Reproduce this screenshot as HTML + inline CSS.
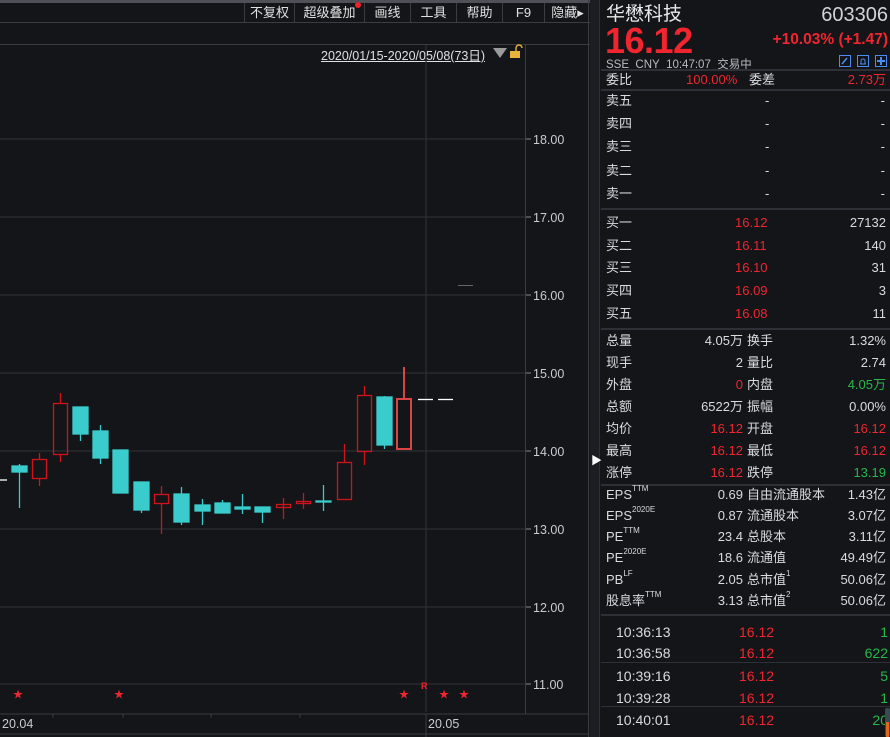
<!DOCTYPE html>
<html><head><meta charset="utf-8"><style>
*{margin:0;padding:0;box-sizing:border-box}
body{width:890px;height:737px;background:#131519;overflow:hidden;position:relative;font-family:"Liberation Sans","Noto Sans CJK SC",sans-serif;color:#d8dbe0}
.a{position:absolute;white-space:nowrap}
.tb{position:absolute;top:3px;height:19px;font-size:13px;color:#e0e0e0;text-align:center;line-height:19px;border-left:1px solid #3a3c42}
.r{color:#f0252f}.g{color:#27b84a}
.row{position:absolute;left:601px;width:287px;height:22px;font-size:13px;line-height:22px}
.row span{position:absolute}
.hl{position:absolute;left:601px;width:289px;height:2px;background:#2d3036}
sup{font-size:8px;vertical-align:top;line-height:10px}
</style></head><body>
<div class="a" style="left:0;top:0;width:590px;height:3px;background:#4f5058"></div>
<div class="a" style="left:0;top:22px;width:590px;height:1px;background:#3a3c42"></div>
<div class="a" style="left:0;top:44px;width:590px;height:1px;background:#3a3c42"></div>
<div class="tb" style="left:244px;width:50px">不复权</div>
<div class="tb" style="left:294px;width:70px">超级叠加<span style="position:absolute;right:3px;top:-1px;width:6px;height:6px;border-radius:3px;background:#f0202a"></span></div>
<div class="tb" style="left:364px;width:46px">画线</div>
<div class="tb" style="left:410px;width:46px">工具</div>
<div class="tb" style="left:456px;width:46px">帮助</div>
<div class="tb" style="left:502px;width:42px">F9</div>
<div class="tb" style="left:544px;width:46px">隐藏▸</div>
<div class="a" style="left:321px;top:45px;font-size:12.5px;color:#e0e0e0;text-decoration:underline">2020/01/15-2020/05/08(73日)</div>
<svg class="a" style="left:0;top:0" width="590" height="737">
<polygon points="493,48 507,48 500,58" fill="#9a9a9a"/>
<rect x="510" y="51" width="10" height="7" fill="#e8b33a"/><path d="M516,51 v-3 a3,3 0 0 1 6,0" stroke="#e8b33a" fill="none" stroke-width="1.4"/>
<g stroke="#2c2e33" stroke-width="1.3">
<line x1="0" y1="139" x2="525" y2="139"/><line x1="0" y1="217" x2="525" y2="217"/><line x1="0" y1="295" x2="525" y2="295"/><line x1="0" y1="373" x2="525" y2="373"/><line x1="0" y1="451" x2="525" y2="451"/><line x1="0" y1="529" x2="525" y2="529"/><line x1="0" y1="607" x2="525" y2="607"/><line x1="0" y1="684" x2="525" y2="684"/>
<line x1="426" y1="45" x2="426" y2="712"/>
</g>
<line x1="525.5" y1="45" x2="525.5" y2="714" stroke="#3a3c42"/>
<line x1="588.5" y1="0" x2="588.5" y2="737" stroke="#3a3c42"/>
<line x1="0" y1="714" x2="588" y2="714" stroke="#3a3c42"/>
<line x1="0" y1="734" x2="588" y2="734" stroke="#3a3c42"/>
<g stroke="#3a3c42"><line x1="426" y1="714" x2="426" y2="737"/><line x1="53" y1="714" x2="53" y2="718"/><line x1="123" y1="714" x2="123" y2="718"/><line x1="211" y1="714" x2="211" y2="718"/><line x1="300" y1="714" x2="300" y2="718"/></g>
<g stroke="#888" ><line x1="526" y1="139" x2="531" y2="139"/><line x1="526" y1="217" x2="531" y2="217"/><line x1="526" y1="295" x2="531" y2="295"/><line x1="526" y1="373" x2="531" y2="373"/><line x1="526" y1="451" x2="531" y2="451"/><line x1="526" y1="529" x2="531" y2="529"/><line x1="526" y1="607" x2="531" y2="607"/><line x1="526" y1="684" x2="531" y2="684"/></g>
<g font-size="12.5" fill="#c8ccd2" font-family="Liberation Sans"><text x="533" y="144">18.00</text><text x="533" y="222">17.00</text><text x="533" y="300">16.00</text><text x="533" y="378">15.00</text><text x="533" y="456">14.00</text><text x="533" y="534">13.00</text><text x="533" y="612">12.00</text><text x="533" y="689">11.00</text>
<text x="2" y="728">20.04</text><text x="428" y="728">20.05</text></g>
<g stroke="#3acccc" fill="#3acccc" stroke-width="1.3">
<line x1="19.5" y1="464" x2="19.5" y2="508"/><rect x="12" y="466" width="15" height="6"/>
<line x1="80.5" y1="434" x2="80.5" y2="441"/><rect x="73" y="407" width="15" height="27"/>
<line x1="100.5" y1="425" x2="100.5" y2="464"/><rect x="93" y="431" width="15" height="27"/>
<rect x="113" y="450" width="15" height="43"/>
<line x1="141.5" y1="510" x2="141.5" y2="513"/><rect x="134" y="482" width="15" height="28"/>
<line x1="181.5" y1="487" x2="181.5" y2="525"/><rect x="174" y="494" width="15" height="28"/>
<line x1="202.5" y1="499" x2="202.5" y2="525"/><rect x="195" y="505" width="15" height="6"/>
<line x1="222.5" y1="500" x2="222.5" y2="503"/><rect x="215" y="503" width="15" height="10"/>
<line x1="242.5" y1="494" x2="242.5" y2="514"/><rect x="235" y="507" width="15" height="2"/>
<line x1="262.5" y1="507" x2="262.5" y2="523"/><rect x="255" y="507" width="15" height="5"/>
<line x1="323.5" y1="485" x2="323.5" y2="511"/><rect x="316" y="501" width="15" height="1"/>
<line x1="384.5" y1="396" x2="384.5" y2="449"/><rect x="377" y="397" width="15" height="48"/>
</g>
<g stroke="#d0121a" fill="none" stroke-width="1.3">
<line x1="39.5" y1="453" x2="39.5" y2="459"/><line x1="39.5" y1="478" x2="39.5" y2="486"/><rect x="32.5" y="459.5" width="14" height="19"/>
<line x1="60.5" y1="393" x2="60.5" y2="403"/><line x1="60.5" y1="454" x2="60.5" y2="462"/><rect x="53.5" y="403.5" width="14" height="51"/>
<line x1="161.5" y1="486" x2="161.5" y2="494"/><line x1="161.5" y1="503" x2="161.5" y2="534"/><rect x="154.5" y="494.5" width="14" height="9"/>
<line x1="283.5" y1="498" x2="283.5" y2="519"/><rect x="276.5" y="504.5" width="14" height="3"/>
<line x1="303.5" y1="493" x2="303.5" y2="509"/><rect x="296.5" y="501.5" width="14" height="2"/>
<line x1="344.5" y1="444" x2="344.5" y2="462"/><rect x="337.5" y="462.5" width="14" height="37"/>
<line x1="364.5" y1="386" x2="364.5" y2="395"/><line x1="364.5" y1="451" x2="364.5" y2="465"/><rect x="357.5" y="395.5" width="14" height="56"/>
</g>
<g stroke="#d94545" fill="none" stroke-width="2"><line x1="404" y1="367" x2="404" y2="399"/><rect x="397" y="399" width="14" height="50"/></g>
<g stroke="#fff" stroke-width="1.3"><line x1="0" y1="480" x2="7" y2="480"/><line x1="418" y1="399.5" x2="433" y2="399.5"/><line x1="438" y1="399.5" x2="453" y2="399.5"/></g>
<line x1="458" y1="285.5" x2="473" y2="285.5" stroke="#666"/>
<g fill="#f0252f" font-size="10"><text x="13" y="698">★</text><text x="114" y="698">★</text><text x="399" y="698">★</text><text x="439" y="698">★</text><text x="459" y="698">★</text><text x="421" y="689" font-size="9" font-weight="bold">R</text></g>
<rect x="590" y="0" width="1" height="737" fill="#2d3036"/>
</svg>
<div class="a" style="left:590px;top:0;width:10px;height:737px;background:#1c1e23;border-right:1px solid #2d3036"></div>
<div class="a" style="left:591px;top:452px;color:#fff;font-size:11px">▶</div>
<div class="a" style="left:606px;top:4px;font-size:19px;line-height:22px;color:#e8e8e8">华懋科技</div>
<div class="a" style="right:2px;top:4px;font-size:20px;line-height:22px;color:#d0d4d8">603306</div>
<div class="a r" style="left:605px;top:24px;font-size:36px;line-height:34px;font-weight:bold;letter-spacing:-0.5px">16.12</div>
<div class="a r" style="right:2px;top:31px;font-size:15.5px;line-height:18px;font-weight:bold">+10.03% (+1.47)</div>
<div class="a" style="left:606px;top:56px;font-size:11.5px;color:#b8bcc2">SSE&nbsp; CNY&nbsp; 10:47:07&nbsp; 交易中</div>
<svg class="a" style="left:839px;top:55px" width="50" height="13"><g fill="none" stroke="#4a8cf0"><rect x="0.5" y="0.5" width="11" height="11"/><rect x="18.5" y="0.5" width="11" height="11"/><rect x="36.5" y="0.5" width="11" height="11"/></g><path d="M3,9 L8,3" stroke="#4a8cf0" stroke-width="1.5"/><path d="M21,9 h6 M22,9 v-3 a2,2 0 0 1 4,0 v3" stroke="#4a8cf0" fill="none"/><path d="M42,2 v8 M38,6 h8" stroke="#4a8cf0" stroke-width="2"/></svg>
<div class="hl" style="top:69px"></div>
<div class="row" style="top:69px"><span style="left:5px">委比</span><span class="r" style="left:85px">100.00%</span><span style="left:148px">委差</span><span class="r" style="right:2px">2.73万</span></div>
<div class="hl" style="top:89px"></div>
<div class="row" style="top:90px"><span style="left:5px">卖五</span><span style="left:164px">-</span><span style="right:3px">-</span></div>
<div class="row" style="top:113px"><span style="left:5px">卖四</span><span style="left:164px">-</span><span style="right:3px">-</span></div>
<div class="row" style="top:136px"><span style="left:5px">卖三</span><span style="left:164px">-</span><span style="right:3px">-</span></div>
<div class="row" style="top:160px"><span style="left:5px">卖二</span><span style="left:164px">-</span><span style="right:3px">-</span></div>
<div class="row" style="top:183px"><span style="left:5px">卖一</span><span style="left:164px">-</span><span style="right:3px">-</span></div>
<div class="hl" style="top:208px"></div>
<div class="row" style="top:212px"><span style="left:5px">买一</span><span class="r" style="left:134px">16.12</span><span style="right:2px">27132</span></div>
<div class="row" style="top:235px"><span style="left:5px">买二</span><span class="r" style="left:134px">16.11</span><span style="right:2px">140</span></div>
<div class="row" style="top:257px"><span style="left:5px">买三</span><span class="r" style="left:134px">16.10</span><span style="right:2px">31</span></div>
<div class="row" style="top:280px"><span style="left:5px">买四</span><span class="r" style="left:134px">16.09</span><span style="right:2px">3</span></div>
<div class="row" style="top:303px"><span style="left:5px">买五</span><span class="r" style="left:134px">16.08</span><span style="right:2px">11</span></div>
<div class="hl" style="top:328px"></div>
<div class="row" style="top:330px"><span style="left:5px">总量</span><span style="right:145px">4.05万</span><span style="left:146px">换手</span><span style="right:2px">1.32%</span></div>
<div class="row" style="top:352px"><span style="left:5px">现手</span><span style="right:145px">2</span><span style="left:146px">量比</span><span style="right:2px">2.74</span></div>
<div class="row" style="top:374px"><span style="left:5px">外盘</span><span class="r" style="right:145px">0</span><span style="left:146px">内盘</span><span class="g" style="right:2px">4.05万</span></div>
<div class="row" style="top:396px"><span style="left:5px">总额</span><span style="right:145px">6522万</span><span style="left:146px">振幅</span><span style="right:2px">0.00%</span></div>
<div class="row" style="top:418px"><span style="left:5px">均价</span><span class="r" style="right:145px">16.12</span><span style="left:146px">开盘</span><span class="r" style="right:2px">16.12</span></div>
<div class="row" style="top:440px"><span style="left:5px">最高</span><span class="r" style="right:145px">16.12</span><span style="left:146px">最低</span><span class="r" style="right:2px">16.12</span></div>
<div class="row" style="top:462px"><span style="left:5px">涨停</span><span class="r" style="right:145px">16.12</span><span style="left:146px">跌停</span><span class="g" style="right:2px">13.19</span></div>
<div class="hl" style="top:484px"></div>
<div class="row" style="top:484px"><span style="left:5px">EPS<sup>TTM</sup></span><span style="right:145px">0.69</span><span style="left:146px">自由流通股本</span><span style="right:2px">1.43亿</span></div>
<div class="row" style="top:505px"><span style="left:5px">EPS<sup>2020E</sup></span><span style="right:145px">0.87</span><span style="left:146px">流通股本</span><span style="right:2px">3.07亿</span></div>
<div class="row" style="top:526px"><span style="left:5px">PE<sup>TTM</sup></span><span style="right:145px">23.4</span><span style="left:146px">总股本</span><span style="right:2px">3.11亿</span></div>
<div class="row" style="top:547px"><span style="left:5px">PE<sup>2020E</sup></span><span style="right:145px">18.6</span><span style="left:146px">流通值</span><span style="right:2px">49.49亿</span></div>
<div class="row" style="top:569px"><span style="left:5px">PB<sup>LF</sup></span><span style="right:145px">2.05</span><span style="left:146px">总市值<sup>1</sup></span><span style="right:2px">50.06亿</span></div>
<div class="row" style="top:590px"><span style="left:5px">股息率<sup>TTM</sup></span><span style="right:145px">3.13</span><span style="left:146px">总市值<sup>2</sup></span><span style="right:2px">50.06亿</span></div>
<div class="hl" style="top:614px"></div>
<div class="row" style="top:621px;font-size:14px"><span style="left:15px">10:36:13</span><span class="r" style="left:138px">16.12</span><span class="g" style="right:0">1</span></div>
<div class="row" style="top:642px;font-size:14px"><span style="left:15px">10:36:58</span><span class="r" style="left:138px">16.12</span><span class="g" style="right:0">622</span></div>
<div class="hl" style="top:662px;height:1px"></div>
<div class="row" style="top:665px;font-size:14px"><span style="left:15px">10:39:16</span><span class="r" style="left:138px">16.12</span><span class="g" style="right:0">5</span></div>
<div class="row" style="top:687px;font-size:14px"><span style="left:15px">10:39:28</span><span class="r" style="left:138px">16.12</span><span class="g" style="right:0">1</span></div>
<div class="hl" style="top:706px;height:1px"></div>
<div class="row" style="top:709px;font-size:14px"><span style="left:15px">10:40:01</span><span class="r" style="left:138px">16.12</span><span class="g" style="right:0">20</span></div>
<div class="a" style="left:885px;top:708px;width:5px;height:29px;background:#3a4a55;border-radius:2px"></div>
<div class="a" style="left:886px;top:722px;width:3px;height:15px;background:#e06a1a"></div>
</body></html>
